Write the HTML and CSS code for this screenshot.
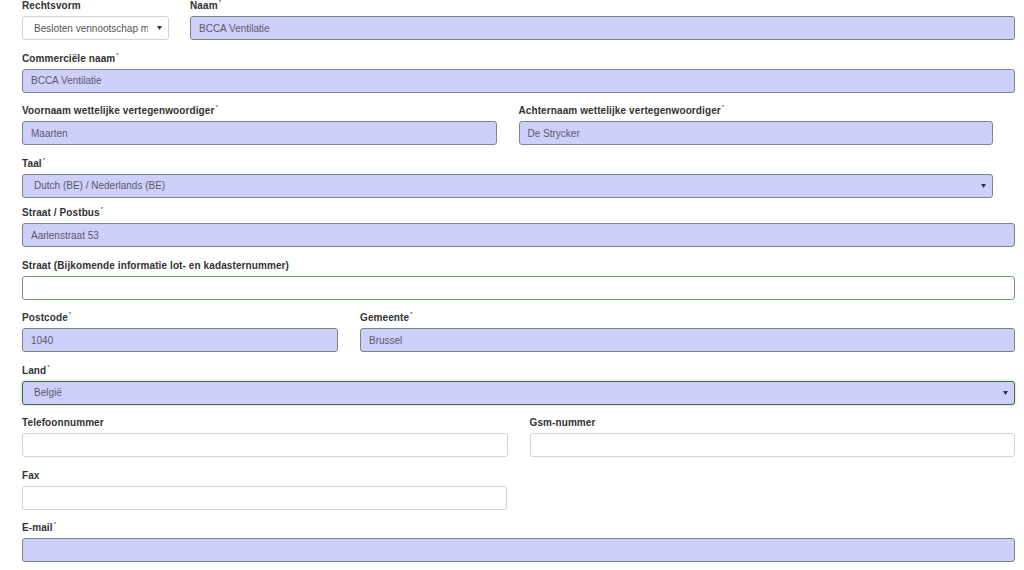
FILE: index.html
```html
<!DOCTYPE html>
<html lang="nl">
<head>
<meta charset="utf-8">
<title>Gegevens</title>
<link rel="stylesheet" href="styles.css">
</head>
<body>
<form class="form">
  <div class="row row-first">
    <div class="group w-rechts">
      <label class="label">Rechtsvorm</label>
      <select class="control select plain"><option>Besloten vennootschap met beperkte aansprakelijkheid</option></select>
    </div>
    <div class="group grow">
      <label class="label">Naam<sup>*</sup></label>
      <input class="control filled" type="text" value="BCCA Ventilatie">
    </div>
  </div>

  <div class="row">
    <div class="group grow">
      <label class="label">Commerciële naam<sup>*</sup></label>
      <input class="control filled" type="text" value="BCCA Ventilatie">
    </div>
  </div>

  <div class="row row-wide-gap narrow">
    <div class="group grow">
      <label class="label">Voornaam wettelijke vertegenwoordiger<sup>*</sup></label>
      <input class="control filled" type="text" value="Maarten">
    </div>
    <div class="group grow">
      <label class="label">Achternaam wettelijke vertegenwoordiger<sup>*</sup></label>
      <input class="control filled" type="text" value="De Strycker">
    </div>
  </div>

  <div class="row narrow row-tight">
    <div class="group grow">
      <label class="label">Taal<sup>*</sup></label>
      <select class="control select filled"><option>Dutch (BE) / Nederlands (BE)</option></select>
    </div>
  </div>

  <div class="row">
    <div class="group grow">
      <label class="label">Straat / Postbus<sup>*</sup></label>
      <input class="control filled" type="text" value="Aarlenstraat 53">
    </div>
  </div>

  <div class="row">
    <div class="group grow">
      <label class="label">Straat (Bijkomende informatie lot- en kadasternummer)</label>
      <input class="control success" type="text" value="">
    </div>
  </div>

  <div class="row row-wide-gap">
    <div class="group w-postcode">
      <label class="label">Postcode<sup>*</sup></label>
      <input class="control filled" type="text" value="1040">
    </div>
    <div class="group grow">
      <label class="label">Gemeente<sup>*</sup></label>
      <input class="control filled" type="text" value="Brussel">
    </div>
  </div>

  <div class="row">
    <div class="group grow">
      <label class="label">Land<sup>*</sup></label>
      <select class="control select filled focused"><option>België</option></select>
    </div>
  </div>

  <div class="row row-wide-gap">
    <div class="group grow">
      <label class="label">Telefoonnummer</label>
      <input class="control plain" type="text" value="">
    </div>
    <div class="group grow">
      <label class="label">Gsm-nummer</label>
      <input class="control plain" type="text" value="">
    </div>
  </div>

  <div class="row">
    <div class="group w-half">
      <label class="label">Fax</label>
      <input class="control plain" type="text" value="">
    </div>
  </div>

  <div class="row">
    <div class="group grow">
      <label class="label">E-mail<sup>*</sup></label>
      <input class="control filled" type="text" value="">
    </div>
  </div>
</form>
</body>
</html>
```
FILE: styles.css
```css
html, body {
  margin: 0;
  padding: 0;
  background: #ffffff;
  overflow: hidden;
}

body {
  font-family: "Liberation Sans", Arial, sans-serif;
  font-size: 10px;
  color: #333333;
}

.form {
  display: flex;
  flex-direction: column;
  padding: 0 9px 0 22px;
  margin-top: -1px;
}

.row {
  display: flex;
  gap: 21px;
  margin-bottom: 11.5px;
}

.row-wide-gap {
  gap: 22px;
}

.row-tight {
  margin-bottom: 8.5px;
}

.narrow {
  margin-right: 22px;
}

.group {
  display: flex;
  flex-direction: column;
  min-width: 0;
}

.grow {
  flex: 1 1 0;
}

.w-rechts {
  width: 147px;
  flex: 0 0 147px;
}

.w-postcode {
  width: 316px;
  flex: 0 0 316px;
}

.w-half {
  width: 485px;
  flex: 0 0 485px;
}

.label {
  display: block;
  font-weight: bold;
  font-size: 10px;
  letter-spacing: 0.1px;
  line-height: 14px;
  height: 14px;
  margin-bottom: 3px;
  color: #333333;
  white-space: nowrap;
}

.label sup {
  font-size: 6px;
  font-weight: normal;
  vertical-align: top;
  line-height: 8px;
  margin-left: 1px;
  position: relative;
  top: -1px;
}

.control {
  box-sizing: border-box;
  height: 24px;
  width: 100%;
  margin: 0;
  padding: 0 8px;
  font-family: "Liberation Sans", Arial, sans-serif;
  font-size: 10px;
  color: #5a5a66;
  border: 1px solid #cccccc;
  border-radius: 3px;
  background: #ffffff;
  outline: none;
}

.plain {
  border-color: #d2d2d2;
  background-color: #ffffff;
}

.filled {
  background-color: #cfcffb;
  border-color: #768a7f;
}

.success {
  background-color: #ffffff;
  border-color: #6f9a6f;
}

.select {
  -webkit-appearance: none;
  appearance: none;
  padding: 0 20px 0 11px;
  background-image: url("data:image/svg+xml;utf8,<svg xmlns='http://www.w3.org/2000/svg' width='5' height='4'><path d='M0 0H5L2.5 4Z' fill='%23333'/></svg>");
  background-repeat: no-repeat;
  background-position: right 6px center;
}

.select.plain {
  color: #555555;
}

.focused {
  border-color: #3f6a45;
  box-shadow: 0 0 3px rgba(110, 180, 110, 0.55);
}
```
